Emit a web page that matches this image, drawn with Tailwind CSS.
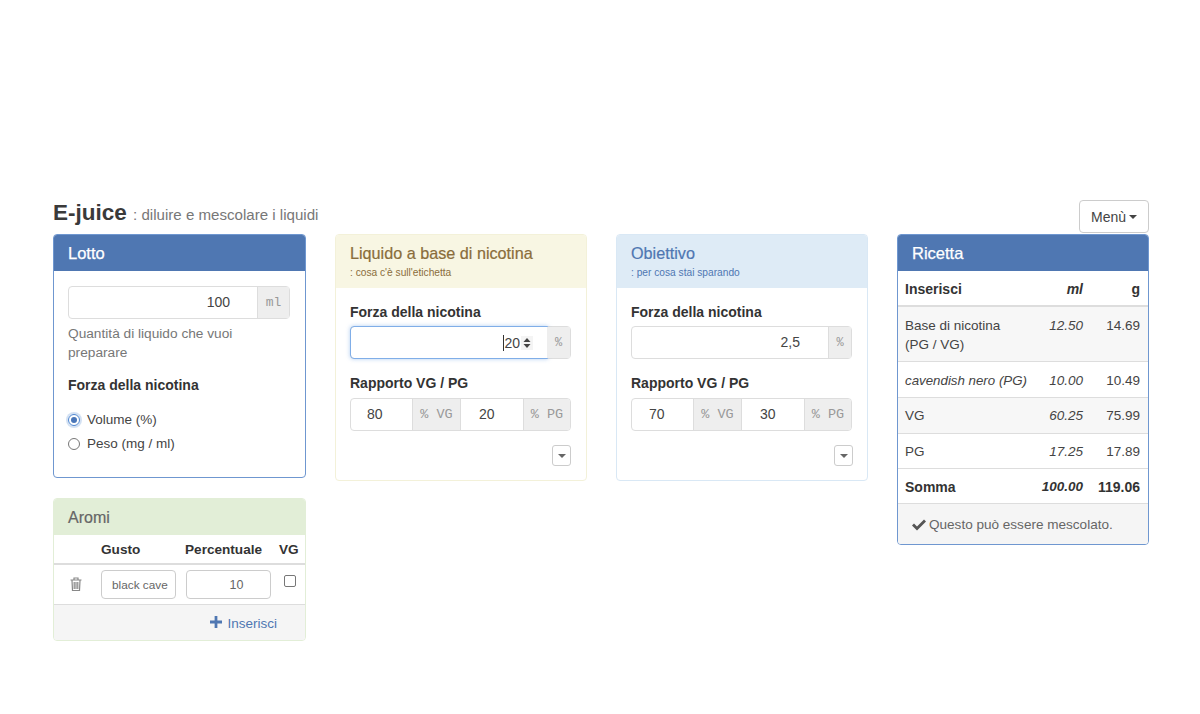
<!DOCTYPE html>
<html lang="it">
<head>
<meta charset="utf-8">
<script src="https://cdn.jsdelivr.net/npm/@tailwindcss/browser@4"></script>
<title>E-juice</title>
</head>
<body class="bg-white font-['Liberation_Sans',Arial,sans-serif] text-[14px] leading-[20px] text-[#333]">
<div class="h-[714px] w-[1200px] overflow-hidden pl-[53px] pr-[51px] pt-[199px]">
  <div class="flex h-[35px] items-start justify-between">
    <h1 class="text-[22.5px] leading-[28px] font-bold text-[#3a3a3a]">E-juice <span class="text-[15.1px] font-normal text-[#777]">: diluire e mescolare i liquidi</span></h1>
    <button class="mt-[1px] flex h-[33px] w-[70px] items-center justify-center gap-[3px] rounded-[4px] border border-[#ccc] bg-white pt-[1px] text-[#444]">Menù <span class="border-x-[4px] border-t-[4px] border-x-transparent border-t-[#444]"></span></button>
  </div>
  <div class="grid grid-cols-[253px_252px_252px_252px] items-start gap-x-[29px]">
    <div class="flex flex-col gap-[20px]">
      <section class="h-[244px] rounded-[4px] border border-[#6f97d0] bg-white">
        <div class="h-[36px] rounded-t-[3px] bg-[#4f77b2] px-[14px] pt-[8px] text-[16.5px] text-white [-webkit-text-stroke:0.25px_white]">Lotto</div>
        <div class="pl-[14px] pr-[15px] pt-[15px]">
          <div class="flex h-[33px] rounded-[4px] border border-[#ddd]">
            <div class="flex-1 pr-[27px] text-right leading-[31px] text-[#444]">100</div>
            <div class="flex w-[32px] items-center justify-center border-l border-[#ddd] bg-[#eee] font-['Liberation_Mono',monospace] text-[13px] text-[#999]">ml</div>
          </div>
          <p class="mt-[5px] text-[13.7px] leading-[19px] text-[#777]">Quantità di liquido che vuoi preparare</p>
          <div class="mt-[13px] font-bold text-[#333]">Forza della nicotina</div>
          <div class="mt-[13px] flex h-[24px] items-center gap-[7px] text-[13.5px] text-[#444]">
            <span class="flex size-[12px] items-center justify-center rounded-full border border-[#4f86d0] ring-2 ring-[#4f86d0]/25"><span class="size-[6px] rounded-full bg-[#4a76b8]"></span></span>Volume (%)
          </div>
          <div class="flex h-[24px] items-center gap-[7px] text-[13.5px] text-[#444]">
            <span class="size-[12px] rounded-full border border-[#777] bg-white"></span>Peso (mg / ml)
          </div>
        </div>
      </section>
      <section class="h-[143px] overflow-hidden rounded-[4px] border border-[#e2eed7] bg-white">
        <div class="h-[36px] bg-[#e2eed7] px-[14px] pt-[9px] text-[16px] text-[#666] [-webkit-text-stroke:0.2px_#666]">Aromi</div>
        <div class="flex h-[30px] items-center border-b-2 border-[#ddd] pt-[2px] text-[13.6px] font-bold">
          <span class="ml-[47px] w-[84px]">Gusto</span><span class="w-[94px]">Percentuale</span><span>VG</span>
        </div>
        <div class="flex h-[40px] items-center border-b border-[#ddd]">
          <svg class="mb-[2px] ml-[16px]" width="12" height="14" viewBox="0 0 12 14" fill="none" stroke="#888" stroke-width="1.2"><path d="M0.500 3h11M4 3V1h4v2M2 3.500l.5 10h7l.5-10"/><path d="M4.200 5v7M6 5v7M7.800 5v7"/></svg>
          <span class="ml-[19px] flex h-[29px] w-[75px] items-center rounded-[4px] border border-[#ccc] pl-[10px] text-[11.8px] text-[#666] whitespace-nowrap">black cave</span>
          <span class="ml-[10px] flex h-[29px] w-[85px] items-center justify-center rounded-[4px] border border-[#ccc] pl-[16px] text-[12.5px] text-[#666]">10</span>
          <span class="mb-[8px] ml-[13px] size-[12px] rounded-[2px] border border-[#777] bg-white"></span>
        </div>
        <div class="flex h-[35px] items-center justify-end gap-[5px] bg-[#f5f5f5] pr-[28px] pt-[2px] text-[13.5px] text-[#4f77b2]">
          <svg class="mb-[4px]" width="12" height="12" viewBox="0 0 13 13" fill="#4f77b2"><path d="M5 0h3v5h5v3H8v5H5V8H0V5h5z"/></svg>Inserisci
        </div>
      </section>
    </div>

    <section class="h-[247px] rounded-[4px] border border-[#f3f1d9] bg-white">
      <div class="h-[53px] rounded-t-[3px] bg-[#f8f6e3] px-[14px] pt-[8px] text-[#8a6d3b]">
        <div class="text-[16.2px] leading-[20px] [-webkit-text-stroke:0.2px_#8a6d3b]">Liquido a base di nicotina</div>
        <div class="mt-[3px] text-[10.2px] leading-[14px]">: cosa c'è sull'etichetta</div>
      </div>
      <div class="pl-[14px] pr-[15px] pt-[14px]">
        <div class="font-bold">Forza della nicotina</div>
        <div class="mt-[4px] flex h-[33px] rounded-[4px] border border-[#ddd]">
          <div class="-m-px flex flex-1 items-center justify-end rounded-l-[4px] border border-[#80aee8] pr-[14px] text-[#444] shadow-[0_0_4px_rgba(128,174,232,0.6)]"><span class="border-l border-[#333] leading-[16px]">20</span>
            <span class="ml-[1px] flex h-[14px] w-[12px] items-center justify-center bg-[#f4f4f4]"><svg width="10" height="12" viewBox="0 0 10 12" fill="#444"><path d="M5 1l3.500 4h-7zM5 11l3.500-4h-7z"/></svg></span>
          </div>
          <div class="flex w-[23px] items-center justify-center bg-[#eee] font-['Liberation_Mono',monospace] text-[12px] text-[#999]">%</div>
        </div>
        <div class="mt-[14px] font-bold">Rapporto VG / PG</div>
        <div class="mt-[5px] flex h-[33px] overflow-hidden rounded-[4px] border border-[#ddd]">
          <div class="w-[61px] pl-[16px] leading-[31px] text-[#444]">80</div>
          <div class="w-[49px] border-x border-[#ddd] bg-[#eee] text-center font-['Liberation_Mono',monospace] text-[13.5px] leading-[31px] text-[#999]">% VG</div>
          <div class="w-[62px] pl-[18px] leading-[31px] text-[#444]">20</div>
          <div class="flex-1 border-l border-[#ddd] bg-[#eee] text-center font-['Liberation_Mono',monospace] text-[13.5px] leading-[31px] text-[#999]">% PG</div>
        </div>
        <div class="mt-[14px] flex justify-end">
          <span class="flex h-[21px] w-[19px] items-center justify-center rounded-[3px] border border-[#ccc]"><span class="border-x-[4px] border-t-[4px] border-x-transparent border-t-[#666]"></span></span>
        </div>
      </div>
    </section>

    <section class="h-[247px] rounded-[4px] border border-[#d9e8f5] bg-white">
      <div class="h-[53px] rounded-t-[3px] bg-[#deebf6] px-[14px] pt-[8px] text-[#4f77b2]">
        <div class="text-[16.2px] leading-[20px] [-webkit-text-stroke:0.2px_#4f77b2]">Obiettivo</div>
        <div class="mt-[3px] text-[10.2px] leading-[14px]">: per cosa stai sparando</div>
      </div>
      <div class="pl-[14px] pr-[15px] pt-[14px]">
        <div class="font-bold">Forza della nicotina</div>
        <div class="mt-[4px] flex h-[33px] rounded-[4px] border border-[#ddd]">
          <div class="flex-1 pr-[28px] text-right leading-[31px] text-[#444]">2,5</div>
          <div class="flex w-[23px] items-center justify-center border-l border-[#ddd] bg-[#eee] font-['Liberation_Mono',monospace] text-[12px] text-[#999]">%</div>
        </div>
        <div class="mt-[14px] font-bold">Rapporto VG / PG</div>
        <div class="mt-[5px] flex h-[33px] overflow-hidden rounded-[4px] border border-[#ddd]">
          <div class="w-[61px] pl-[17px] leading-[31px] text-[#444]">70</div>
          <div class="w-[49px] border-x border-[#ddd] bg-[#eee] text-center font-['Liberation_Mono',monospace] text-[13.5px] leading-[31px] text-[#999]">% VG</div>
          <div class="w-[62px] pl-[18px] leading-[31px] text-[#444]">30</div>
          <div class="flex-1 border-l border-[#ddd] bg-[#eee] text-center font-['Liberation_Mono',monospace] text-[13.5px] leading-[31px] text-[#999]">% PG</div>
        </div>
        <div class="mr-[-1px] mt-[14px] flex justify-end">
          <span class="flex h-[21px] w-[19px] items-center justify-center rounded-[3px] border border-[#ccc]"><span class="border-x-[4px] border-t-[4px] border-x-transparent border-t-[#666]"></span></span>
        </div>
      </div>
    </section>

    <section class="h-[311px] overflow-hidden rounded-[4px] border border-[#6f97d0] bg-white">
      <div class="h-[36px] bg-[#4f77b2] px-[14px] pt-[8px] text-[16.5px] text-white [-webkit-text-stroke:0.25px_white]">Ricetta</div>
      <div class="grid grid-cols-[1fr_56px_65px] text-[13.5px] text-[#444]">
        <div class="col-span-3 grid h-[36px] grid-cols-subgrid items-center border-b-2 border-[#ddd] pl-[7px] pr-[8px] pt-[1px] text-[14px] font-bold text-[#333]"><span>Inserisci</span><span class="text-right italic">ml</span><span class="text-right">g</span></div>
        <div class="col-span-3 grid h-[55px] grid-cols-subgrid border-b border-[#ddd] bg-[#f7f7f7] pl-[7px] pr-[8px] pt-[9px] leading-[19px]"><span>Base di nicotina<br>(PG / VG)</span><span class="text-right italic">12.50</span><span class="text-right">14.69</span></div>
        <div class="col-span-3 grid h-[36px] grid-cols-subgrid items-center border-b border-[#ddd] pl-[7px] pr-[8px] pt-[2px]"><span class="whitespace-nowrap text-[13.3px] italic">cavendish nero (PG)</span><span class="text-right italic">10.00</span><span class="text-right">10.49</span></div>
        <div class="col-span-3 grid h-[36px] grid-cols-subgrid items-center border-b border-[#ddd] bg-[#f7f7f7] pl-[7px] pr-[8px] pt-[1px]"><span>VG</span><span class="text-right italic">60.25</span><span class="text-right">75.99</span></div>
        <div class="col-span-3 grid h-[35px] grid-cols-subgrid items-center border-b border-[#ddd] pl-[7px] pr-[8px] pt-[2px]"><span>PG</span><span class="text-right italic">17.25</span><span class="text-right">17.89</span></div>
        <div class="col-span-3 grid h-[35px] grid-cols-subgrid items-center border-b border-[#ddd] pl-[7px] pr-[8px] pt-[1px] font-bold text-[#333]"><span class="text-[14px]">Somma</span><span class="text-right italic">100.00</span><span class="text-right text-[14px]">119.06</span></div>
      </div>
      <div class="flex h-[40px] items-center gap-[3px] bg-[#f5f5f5] pl-[14px] pt-[2px] text-[13.55px] text-[#666]">
        <svg class="mb-[1px]" width="14" height="12" viewBox="0 0 14 12" fill="#555"><path d="M0 6.500l2-2 3 3L12 .5l2 2-9 9z"/></svg>Questo può essere mescolato.
      </div>
    </section>
  </div>
</div>
</body>
</html>
